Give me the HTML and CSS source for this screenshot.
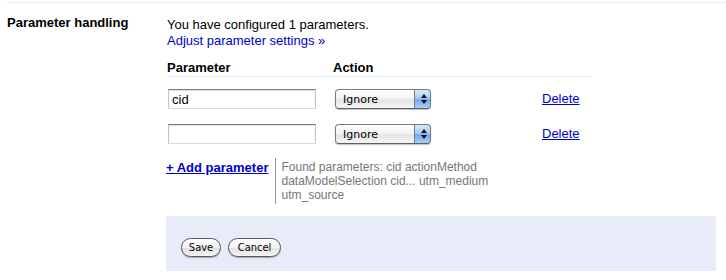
FILE: index.html
```html
<!DOCTYPE html>
<html>
<head>
<meta charset="utf-8">
<link rel="stylesheet" href="styles.css">
</head>
<body>
<div class="section">
  <div class="label">Parameter handling</div>
  <div class="content">
    <p class="intro">You have configured 1 parameters.<br><a href="#" class="plain-link">Adjust parameter settings »</a></p>
    <div class="params">
      <div class="params-head">
        <div class="col-param">Parameter</div>
        <div class="col-action">Action</div>
        <div class="col-del"></div>
      </div>
      <div class="params-row">
        <div class="col-param"><input class="text-input" type="text" value="cid"></div>
        <div class="col-action">
          <span class="select-wrap">
            <select class="aqua-select"><option>Ignore</option></select>
            <span class="select-arrows"><span class="arr-up"></span><span class="arr-down"></span></span>
          </span>
        </div>
        <div class="col-del"><a href="#" class="del-link">Delete</a></div>
      </div>
      <div class="params-row">
        <div class="col-param"><input class="text-input" type="text" value=""></div>
        <div class="col-action">
          <span class="select-wrap">
            <select class="aqua-select"><option>Ignore</option></select>
            <span class="select-arrows"><span class="arr-up"></span><span class="arr-down"></span></span>
          </span>
        </div>
        <div class="col-del"><a href="#" class="del-link">Delete</a></div>
      </div>
    </div>
    <div class="add-row">
      <a href="#" class="add-link">+ Add parameter</a>
      <div class="found">Found parameters: cid actionMethod dataModelSelection cid... utm_medium utm_source</div>
    </div>
    <div class="footer">
      <button class="pill save">Save</button>
      <button class="pill cancel">Cancel</button>
    </div>
  </div>
</div>
</body>
</html>
```
FILE: styles.css
```css
html, body {
  margin: 0;
  padding: 0;
  background: #fff;
}
body {
  font-family: "Liberation Sans", Arial, sans-serif;
  font-size: 13px;
  color: #000;
}
.section {
  display: flex;
  margin: 2px 0 0 6px;
  border-top: 1px solid #e5ecf9;
}
.label {
  width: 160px;
  padding-left: 1px;
  margin-top: 12px;
  font-weight: bold;
  line-height: 16px;
}
.content {
  margin-top: 14px;
  display: flex;
  flex-direction: column;
}
.intro {
  margin: 0;
  line-height: 16px;
}
.plain-link {
  color: #0000cc;
  text-decoration: none;
}
.params {
  width: 425px;
  margin-top: 11px;
}
.params-head {
  display: flex;
  font-weight: bold;
  line-height: 16px;
  border-bottom: 1px solid #e5ecf9;
}
.params-row {
  display: flex;
  align-items: center;
  height: 20px;
  margin-top: 15px;
}
.params-head + .params-row {
  margin-top: 12px;
}
.col-param {
  width: 166px;
}
.col-action {
  width: 209px;
}
.col-del {
  flex: 1;
}
.text-input {
  box-sizing: border-box;
  margin: 0 0 0 1px;
  width: 148px;
  height: 20px;
  padding: 0 3px;
  font-family: "Liberation Sans", Arial, sans-serif;
  font-size: 13px;
  border: 1px solid #c4c4c4;
  border-top-color: #7a7a7a;
  border-bottom-color: #dadada;
  box-shadow: inset 0 1px 1px rgba(0,0,0,0.12);
  outline: none;
  display: block;
}
.select-wrap {
  position: relative;
  display: block;
  margin-left: 2px;
  width: 96px;
  height: 20px;
}
.aqua-select {
  -webkit-appearance: none;
  appearance: none;
  box-sizing: border-box;
  width: 96px;
  height: 20px;
  margin: 0;
  padding: 0 0 0 7px;
  font-family: "DejaVu Sans", sans-serif;
  font-size: 11px;
  color: #000;
  border: 1px solid #7b7b7b;
  border-bottom-color: #5e5e5e;
  border-radius: 4px;
  background:
    linear-gradient(#7b7b7b, #7b7b7b) right 15px top 0 / 1px 100% no-repeat,
    linear-gradient(#d6e8fd 0%, #a9cdf6 45%, #6ea9ef 55%, #a8d2fb 100%) right 0 top 0 / 15px 100% no-repeat,
    linear-gradient(#ffffff 0%, #f4f4f4 45%, #e4e4e4 55%, #f6f6f6 100%);
  box-shadow: 0 1px 1px rgba(0,0,0,0.25);
  outline: none;
  display: block;
}
.select-arrows {
  position: absolute;
  right: 0;
  top: 0;
  width: 15px;
  height: 20px;
  display: flex;
  flex-direction: column;
  align-items: center;
  justify-content: center;
  gap: 2px;
  pointer-events: none;
}
.arr-up {
  width: 0;
  height: 0;
  border-left: 3px solid transparent;
  border-right: 3px solid transparent;
  border-bottom: 4px solid #111;
}
.arr-down {
  width: 0;
  height: 0;
  border-left: 3px solid transparent;
  border-right: 3px solid transparent;
  border-top: 4px solid #111;
}
.del-link {
  color: #0000cc;
  text-decoration: underline;
  line-height: 16px;
}
.add-row {
  display: flex;
  align-items: flex-start;
  margin-top: 14px;
  margin-left: -1px;
}
.add-link {
  color: #0000cc;
  font-weight: bold;
  text-decoration: underline;
  line-height: 16px;
  padding-top: 2px;
  margin-right: 7px;
}
.found {
  width: 230px;
  border-left: 1px solid #999;
  padding: 2px 0 2px 5px;
  font-size: 12px;
  line-height: 14px;
  color: #777;
}
.footer {
  margin-top: 12px;
  margin-left: -1px;
  width: 550px;
  height: 55px;
  box-sizing: border-box;
  padding: 22px 0 0 15px;
  background: #e8ecf9;
  display: flex;
  align-items: flex-start;
  gap: 7px;
}
.pill {
  box-sizing: border-box;
  height: 19px;
  margin: 0;
  padding: 0;
  border: 1px solid #5a5a5a;
  border-radius: 10px;
  background: linear-gradient(#ffffff 0%, #f3f3f3 50%, #e2e2e2 55%, #f4f4f4 100%);
  box-shadow: 0 1px 1px rgba(0,0,0,0.3);
  font-family: "DejaVu Sans Condensed", "DejaVu Sans", sans-serif;
  font-stretch: condensed;
  font-size: 11px;
  color: #000;
  line-height: 17px;
}
.save {
  width: 40px;
}
.cancel {
  width: 53px;
}
```
